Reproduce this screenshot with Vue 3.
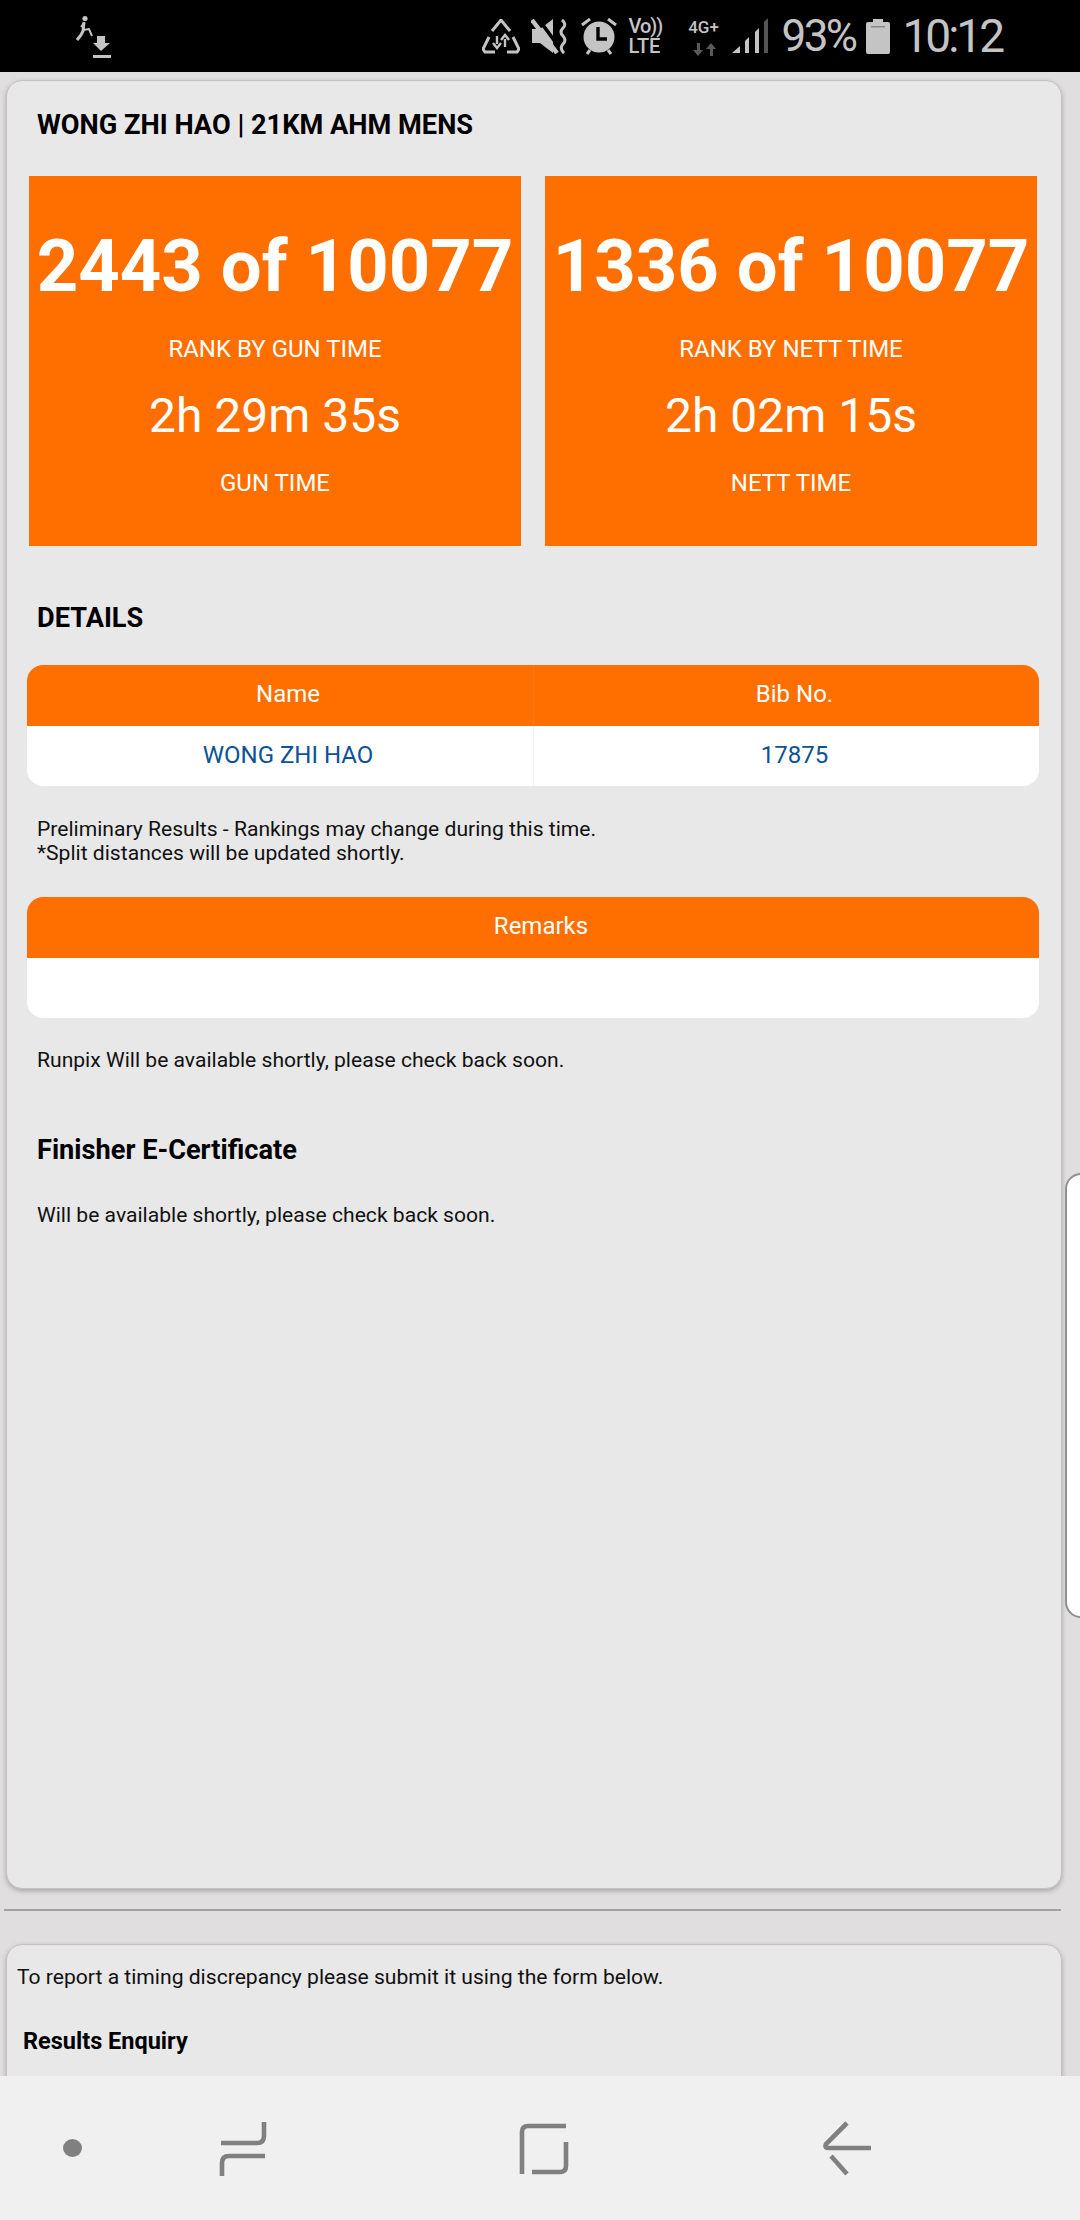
<template>
  <div class="screen">
    <div class="statusbar">
      <div class="notify">
        <svg width="38" height="44" viewBox="0 0 38 44">
          <circle cx="11" cy="3.5" r="2.6" fill="#c4c4c4" />
          <path d="M10 7 L9 16 L7 20 L3 25" fill="none" stroke="#c4c4c4" stroke-width="3" />
          <path d="M9 15 L15 14 L18 21 M10 8 L7 12" fill="none" stroke="#c4c4c4" stroke-width="2" />
          <path d="M23 21 H31 V28 H36 L27 36 L19 28 H23 Z" fill="#c4c4c4" />
          <rect x="19" y="40" width="18" height="3" fill="#c4c4c4" />
        </svg>
      </div>
      <div class="indicators">
        <svg class="ic-share" width="38" height="35" viewBox="0 0 38 35">
          <path d="M10 12 L19 1 L28 12 M7 18 L1 30 L3 33 H13 M31 18 L37 30 L35 33 H25" fill="none" stroke="#c4c4c4" stroke-width="3" />
          <path d="M15 17 V25 M11 24 L15 29 L19 24 M23 28 V20 M19 21 L23 16 L27 21" fill="none" stroke="#c4c4c4" stroke-width="2.4" />
        </svg>
        <svg class="ic-mute" width="38" height="35" viewBox="0 0 38 35">
          <path d="M1 10 H9 L22 0 V34 L9 24 H1 Z" fill="#c4c4c4" />
          <path d="M6 -2 L31 32" stroke="#000" stroke-width="3.6" />
          <path d="M22 24 L22 36 L30 36 Z" fill="#000" />
          <path d="M1 1 L26 34" stroke="#c4c4c4" stroke-width="4.4" />
          <path d="M31 1 Q36 5 32 9 Q28 13 32 17 Q36 21 32 25 Q28 29 33 34" fill="none" stroke="#c4c4c4" stroke-width="3" />
        </svg>
        <svg class="ic-alarm" width="36" height="37" viewBox="0 0 36 37">
          <circle cx="18" cy="19" r="15.5" fill="#c4c4c4" />
          <path d="M17 9 V21 H26" fill="none" stroke="#000" stroke-width="3.4" />
          <path d="M1 7 L9 1 M35 7 L27 1 M6 36 L9 32 M30 36 L27 32" stroke="#c4c4c4" stroke-width="3" />
        </svg>
        <div class="volte"><span class="vo">Vo))</span><span class="lte">LTE</span></div>
        <div class="net">
          <span>4G+</span>
          <svg width="24" height="13" viewBox="0 0 24 13">
            <path d="M5 0 V7 H1 L6 13 L11 7 H8 V0 Z M18 13 V6 H14 L19 0 L24 6 H21 V13 Z" fill="#5a5a5a" />
          </svg>
        </div>
        <svg class="ic-signal" width="37" height="36" viewBox="0 0 37 36">
          <path d="M0 35 L8 28 V35 Z M13 35 V23 L17 19 V35 Z M23 35 V14 L27 10 V35 Z" fill="#c4c4c4" />
          <path d="M32 35 V4 L36 0 V35 Z" fill="#555" />
        </svg>
        <span class="pct">93%</span>
        <svg class="ic-batt" width="24" height="35" viewBox="0 0 24 35">
          <path d="M7 0 H17 V3 H22 Q24 3 24 5 V33 Q24 35 22 35 H2 Q0 35 0 33 V5 Q0 3 2 3 H7 Z" fill="#c4c4c4" />
          <rect x="5" y="7" width="14" height="1.5" fill="#8a8a8a" />
        </svg>
        <span class="clock">10:12</span>
      </div>
    </div>

    <div class="card result">
      <h1 class="title">WONG ZHI HAO | 21KM AHM MENS</h1>
      <div class="stats">
        <div v-for="s in stats" :key="s.label" class="stat">
          <div class="rank">{{ s.rank }}</div>
          <div class="stat-label rank-label">{{ s.rankLabel }}</div>
          <div class="time">{{ s.time }}</div>
          <div class="stat-label">{{ s.label }}</div>
        </div>
      </div>

      <h2 class="details">DETAILS</h2>
      <div class="table">
        <div class="thead two">
          <div class="th">Name</div>
          <div class="th">Bib No.</div>
        </div>
        <div class="tbody two">
          <div class="td">WONG ZHI HAO</div>
          <div class="td">17875</div>
        </div>
      </div>
      <p class="note first">Preliminary Results - Rankings may change during this time.<br />*Split distances will be updated shortly.</p>

      <div class="table second">
        <div class="thead">
          <div class="th">Remarks</div>
        </div>
        <div class="tbody"></div>
      </div>
      <p class="note runpix">Runpix Will be available shortly, please check back soon.</p>

      <h2 class="cert">Finisher E-Certificate</h2>
      <p class="note avail">Will be available shortly, please check back soon.</p>
    </div>

    <div class="divider"></div>

    <div class="card enquiry">
      <p class="note report">To report a timing discrepancy please submit it using the form below.</p>
      <h3 class="enq-title">Results Enquiry</h3>
    </div>

    <div class="edge-handle"></div>

    <div class="navbar">
      <span class="dot"></span>
      <svg class="nav-recent" width="50" height="58" viewBox="0 0 50 58">
        <path d="M46 2 V16 Q46 23 39 23 H3 M47 36 H11 Q4 36 4 43 V56" fill="none" stroke="#808080" stroke-width="4.6" />
      </svg>
      <svg class="nav-home" width="52" height="54" viewBox="0 0 52 54">
        <path d="M48 4 H10 Q4 4 4 10 V52 M48 20 V44 Q48 50 42 50 H14" fill="none" stroke="#808080" stroke-width="4.6" />
      </svg>
      <svg class="nav-back" width="50" height="56" viewBox="0 0 50 56">
        <path d="M24 2 L3 23 Q1 27 6 27 H48 M8 35 L24 53" fill="none" stroke="#808080" stroke-width="4.6" />
      </svg>
    </div>
  </div>
</template>

<script setup>
const stats = [
  { rank: "2443 of 10077", rankLabel: "RANK BY GUN TIME", time: "2h 29m 35s", label: "GUN TIME" },
  { rank: "1336 of 10077", rankLabel: "RANK BY NETT TIME", time: "2h 02m 15s", label: "NETT TIME" },
];
</script>

<style>
html,
body {
  margin: 0;
  background: #e0dede;
}
</style>

<style scoped>
.screen {
  position: relative;
  width: 1080px;
  height: 2220px;
  overflow: hidden;
  background: #e0dede;
  font-family: Roboto, "Liberation Sans", sans-serif;
  color: #000;
}
.statusbar {
  display: flex;
  align-items: center;
  height: 72px;
  background: #000;
  color: #c4c4c4;
}
.notify {
  margin-left: 74px;
  margin-top: 2px;
  display: flex;
}
.indicators {
  display: flex;
  align-items: center;
  margin-left: auto;
  margin-right: 78px;
}
.ic-mute {
  margin-left: 11px;
}
.ic-alarm {
  margin-left: 12px;
}
.volte {
  display: flex;
  flex-direction: column;
  margin-left: 12px;
  width: 40px;
  line-height: 1;
}
.vo {
  font-size: 20px;
  font-weight: 500;
  letter-spacing: -1px;
  height: 20px;
}
.lte {
  font-size: 20px;
  font-weight: 500;
}
.net {
  display: flex;
  flex-direction: column;
  align-items: center;
  margin-left: 16px;
  width: 38px;
  font-size: 17px;
  font-weight: 500;
  line-height: 20px;
  gap: 6px;
}
.ic-signal {
  margin-left: 9px;
}
.pct {
  margin-left: 13px;
  font-size: 44px;
  letter-spacing: -2.6px;
  line-height: 1;
}
.ic-batt {
  margin-left: 11px;
}
.clock {
  margin-left: 12px;
  font-size: 46px;
  letter-spacing: -3px;
  line-height: 1;
}

.card {
  box-sizing: border-box;
  margin-left: 6px;
  width: 1056px;
  background: #e8e8e8;
  border: 1px solid #c2c2c2;
  border-radius: 16px;
  box-shadow: 0 2px 5px rgba(0, 0, 0, 0.25);
}
.result {
  margin-top: 8px;
  height: 1809px;
  padding: 0 22px 0 21px;
}
.title {
  margin: 28px 0 0 9px;
  font-size: 27.2px;
  line-height: 32px;
  font-weight: 700;
}
.stats {
  display: flex;
  gap: 24px;
  margin: 35px 2px 0 1px;
}
.stat {
  flex: 1;
  height: 370px;
  background: #ff6f00;
  color: #fff;
  text-align: center;
  font-size: 24px;
  overflow: hidden;
}
.rank {
  margin-top: 48px;
  font-size: 72.4px;
  font-weight: 700;
  line-height: 86px;
  white-space: nowrap;
}
.stat-label {
  line-height: 28px;
}
.rank-label {
  margin-top: 25px;
}
.time {
  margin-top: 26px;
  font-size: 48px;
  line-height: 54px;
  margin-bottom: 26px;
}
.details {
  margin: 56px 0 0 9px;
  font-size: 27.2px;
  line-height: 32px;
  font-weight: 700;
}
.table {
  margin: 31px 0 0 -1px;
  width: 1012px;
  border-radius: 16px;
  overflow: hidden;
}
.two {
  display: grid;
  grid-template-columns: 1fr 1fr;
}
.thead {
  height: 61px;
  background: #ff6f00;
  color: #fff;
  text-align: center;
  font-size: 24px;
  line-height: 59px;
}
.th,
.td {
  padding-left: 16px;
}
.thead.two .th + .th {
  border-left: 1px solid #f57a1c;
}
.tbody {
  height: 60px;
  background: #fff;
  color: #0b5394;
  text-align: center;
  font-size: 24px;
  line-height: 58px;
}
.tbody.two .td + .td {
  border-left: 1px solid #f4f4f4;
}
.note {
  margin: 0 0 0 9px;
  font-size: 21.1px;
  line-height: 24px;
  color: #111;
}
.first {
  margin-top: 31px;
}
.table.second {
  margin-top: 32px;
}
.runpix {
  margin-top: 30px;
}
.cert {
  margin: 62px 0 0 9px;
  font-size: 27.2px;
  line-height: 32px;
  font-weight: 700;
}
.avail {
  margin-top: 37px;
}
.divider {
  margin: 20px 19px 0 4px;
  height: 2px;
  background: #a0a0a0;
}
.enquiry {
  margin-top: 33px;
  height: 300px;
  padding: 20px 0 0 10px;
}
.report {
  margin-left: 0;
}
.enq-title {
  margin: 38px 0 0 6px;
  font-size: 23.5px;
  line-height: 28px;
  font-weight: 700;
}
.edge-handle {
  position: absolute;
  left: 1065px;
  top: 1173px;
  box-sizing: border-box;
  width: 40px;
  height: 445px;
  background: #fff;
  border: 2px solid #8f8f8f;
  border-radius: 16px;
}
.navbar {
  position: absolute;
  left: 0;
  right: 0;
  bottom: 0;
  height: 144px;
  background: #f0f0f0;
}
.dot {
  position: absolute;
  left: 63px;
  top: 63px;
  width: 19px;
  height: 18px;
  border-radius: 50%;
  background: #808080;
}
.nav-recent {
  position: absolute;
  left: 218px;
  top: 44px;
}
.nav-home {
  position: absolute;
  left: 518px;
  top: 46px;
}
.nav-back {
  position: absolute;
  left: 823px;
  top: 45px;
}
</style>
